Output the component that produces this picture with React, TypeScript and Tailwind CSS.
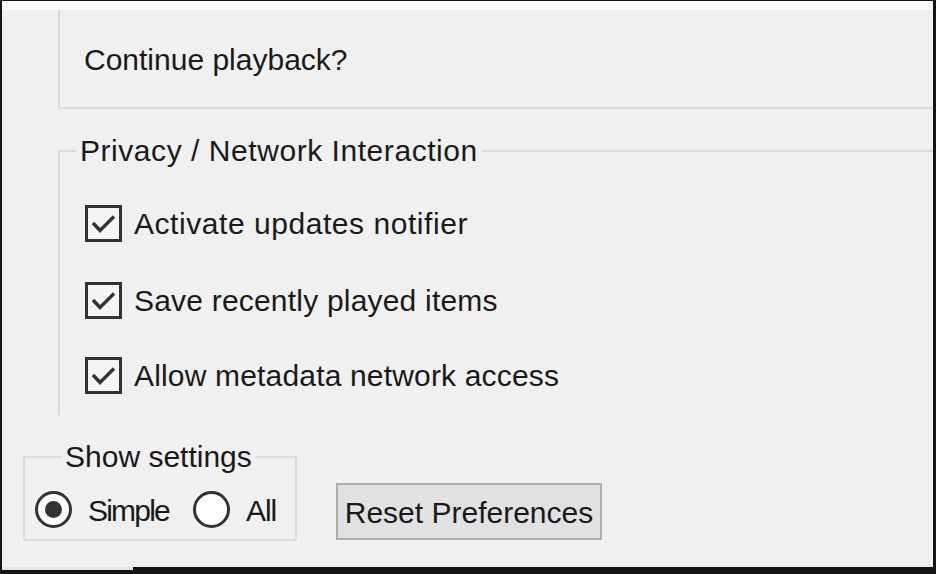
import React from "react";

const font = { fontFamily: '"Liberation Sans", Arial, sans-serif' };

function CheckBox() {
  return (
    <div className="w-[37px] h-[37px] border-[3px] border-[#333333] bg-[#f5f5f5] flex items-center justify-center shrink-0">
      <svg width="31" height="31" viewBox="0 0 31 31">
        <path d="M5 15 L12 22.5 L26 8.5" fill="none" stroke="#333333" strokeWidth="3.4" strokeLinecap="butt" strokeLinejoin="miter" />
      </svg>
    </div>
  );
}

function Radio({ checked }: { checked?: boolean }) {
  return (
    <div className="w-[37px] h-[37px] rounded-full border-[3px] border-[#333333] bg-white flex items-center justify-center shrink-0">
      {checked && <div className="w-[17px] h-[17px] rounded-full bg-[#333333]" />}
    </div>
  );
}

function CheckRow({ label, className, tracking }: { label: string; className: string; tracking: string }) {
  return (
    <div className={"flex items-center h-[37px] gap-[12px] " + className}>
      <CheckBox />
      <span className={"text-[30px] leading-[30px] text-[#1a1a1a] whitespace-nowrap pt-[1px] " + tracking}>{label}</span>
    </div>
  );
}

export default function App() {
  return (
    <div className="w-[936px] h-[574px] bg-[#151515] pt-[1px] pl-[2px] pr-[3px] overflow-hidden" style={font}>
      <div className="w-[931px] h-[566px] bg-[#f0f0f0] overflow-hidden flex flex-col">
        <div className="h-[9px] bg-[#fafafa] shrink-0" />
        <div className="ml-[56px] w-[900px] h-[99px] border-l-2 border-b-2 border-[#dadada] pl-[24px] pt-[35px] shrink-0">
          <span className="text-[30px] leading-[30px] text-[#1a1a1a] whitespace-nowrap">Continue playback?</span>
        </div>
        <fieldset className="ml-[56px] mt-[27px] w-[900px] border-t-2 border-l-2 border-r-0 border-b-0 border-[#dadada] p-0 m-0 shrink-0">
          <legend className="ml-[16px] px-[4px] text-[30px] leading-[30px] text-[#1a1a1a] whitespace-nowrap tracking-[0.55px]">
            Privacy / Network Interaction
          </legend>
          <div className="pl-[25px] pb-[21px] flex flex-col">
            <CheckRow label="Activate updates notifier" className="mt-[39px]" tracking="tracking-[0.55px]" />
            <CheckRow label="Save recently played items" className="mt-[40px]" tracking="tracking-[0.2px]" />
            <CheckRow label="Allow metadata network access" className="mt-[38px]" tracking="tracking-[0.17px]" />
          </div>
        </fieldset>
        <div className="flex items-end mt-[27px] ml-[21px] shrink-0">
          <fieldset className="w-[274px] border-2 border-[#dcdcdc] p-0 m-0">
            <legend className="ml-[36px] px-[4px] text-[30px] leading-[30px] text-[#1a1a1a] whitespace-nowrap">
              Show settings
            </legend>
            <div className="flex items-center pl-[10px] mt-[19px] pb-[11px]">
              <Radio checked />
              <span className="ml-[16px] text-[30px] leading-[30px] text-[#1a1a1a] pt-[3px] tracking-[-1.8px]">Simple</span>
              <div className="ml-[24px]">
                <Radio />
              </div>
              <span className="ml-[16px] text-[30px] leading-[30px] text-[#1a1a1a] pt-[3px] tracking-[-1px]">All</span>
            </div>
          </fieldset>
          <button className="ml-[39px] mb-[1px] w-[266px] h-[57px] border-2 border-[#adadad] bg-[#e1e1e1] flex items-center justify-center pt-[3px] text-[30px] leading-[30px] text-[#1a1a1a] whitespace-nowrap">
            Reset Preferences
          </button>
        </div>
      </div>
      <div className="w-[131px] h-[3px] bg-[#e4e4e4]" />
    </div>
  );
}
